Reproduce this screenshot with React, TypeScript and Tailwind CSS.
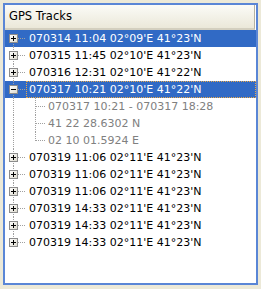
import React from 'react';

type Track = {
  label: string;
  selected?: boolean;
  focused?: boolean;
  children?: string[];
};

const tracks: Track[] = [
  { label: "070314 11:04 02°09'E 41°23'N", selected: true },
  { label: "070315 11:45 02°10'E 41°23'N" },
  { label: "070316 12:31 02°10'E 41°22'N" },
  {
    label: "070317 10:21 02°10'E 41°22'N",
    selected: true,
    focused: true,
    children: ['070317 10:21 - 070317 18:28', '41 22 28.6302 N', '02 10 01.5924 E'],
  },
  { label: "070319 11:06 02°11'E 41°23'N" },
  { label: "070319 11:06 02°11'E 41°23'N" },
  { label: "070319 11:06 02°11'E 41°23'N" },
  { label: "070319 14:33 02°11'E 41°23'N" },
  { label: "070319 14:33 02°11'E 41°23'N" },
  { label: "070319 14:33 02°11'E 41°23'N" },
];

const LINE = '#a0a0a0';

// expander box + dotted connectors for a top-level row
const NodeLines: React.FC<{ first: boolean; last: boolean; open: boolean }> = ({ first, last, open }) => (
  <svg width="21" height="17" className="shrink-0" shapeRendering="crispEdges">
    <line
      x1="8.5"
      x2="8.5"
      y1={first ? 8 : 0}
      y2={last ? 9 : 17}
      stroke={LINE}
      strokeDasharray="1 1"
    />
    <line x1="13" x2="21" y1="8.5" y2="8.5" stroke={LINE} strokeDasharray="1 1" />
    <defs>
      <linearGradient id="boxfill" x1="0" y1="0" x2="1" y2="1">
        <stop offset="0" stopColor="#ffffff" />
        <stop offset="1" stopColor="#dcd9cc" />
      </linearGradient>
    </defs>
    <rect x="4.5" y="4.5" width="8" height="8" fill="url(#boxfill)" stroke="#8c8c8c" />
    <line x1="6" x2="11" y1="8.5" y2="8.5" stroke="#000" />
    {!open && <line x1="8.5" x2="8.5" y1="6" y2="11" stroke="#000" />}
  </svg>
);

const ChildLines: React.FC<{ last: boolean }> = ({ last }) => (
  <svg width="40" height="17" className="shrink-0" shapeRendering="crispEdges">
    <line x1="8.5" x2="8.5" y1="0" y2="17" stroke={LINE} strokeDasharray="1 1" />
    <line x1="30.5" x2="30.5" y1="0" y2={last ? 9 : 17} stroke={LINE} strokeDasharray="1 1" />
    <line x1="31" x2="40" y1="8.5" y2="8.5" stroke={LINE} strokeDasharray="1 1" />
  </svg>
);

export default function App() {
  return (
    <div className="w-[261px] h-[289px] bg-[#ece9d8] p-[3px] font-['DejaVu_Sans',Verdana,sans-serif]">
      <div className="h-[282px] border-2 border-[#5a86d6] bg-white flex flex-col overflow-hidden">
        <div className="h-[25px] shrink-0 flex items-center pl-[4px] text-[11.5px] text-black bg-gradient-to-b from-[#fbfbf7] to-[#ebe8d9] border-b-2 border-b-[#d3cfbf] border-r border-r-[#b5b2a2] mr-px">
          GPS Tracks
        </div>
        <div className="flex flex-col text-[11px] leading-none">
          {tracks.map((t, i) => (
            <React.Fragment key={i}>
              <div className={`h-[17px] flex ${t.selected ? 'bg-[#316ac5] text-white' : 'text-black'}`}>
                <NodeLines first={i === 0} last={i === tracks.length - 1} open={!!t.children} />
                <div
                  className={`flex-1 flex items-center pl-[2px] border ${
                    t.focused ? 'border-dotted border-[#e9a84a]' : 'border-transparent'
                  }`}
                >
                  {t.label}
                </div>
              </div>
              {t.children?.map((c, j) => (
                <div key={j} className="h-[17px] flex text-[#808080]">
                  <ChildLines last={j === t.children!.length - 1} />
                  <div className="flex-1 flex items-center pl-[2px] border border-transparent">{c}</div>
                </div>
              ))}
            </React.Fragment>
          ))}
        </div>
      </div>
    </div>
  );
}
